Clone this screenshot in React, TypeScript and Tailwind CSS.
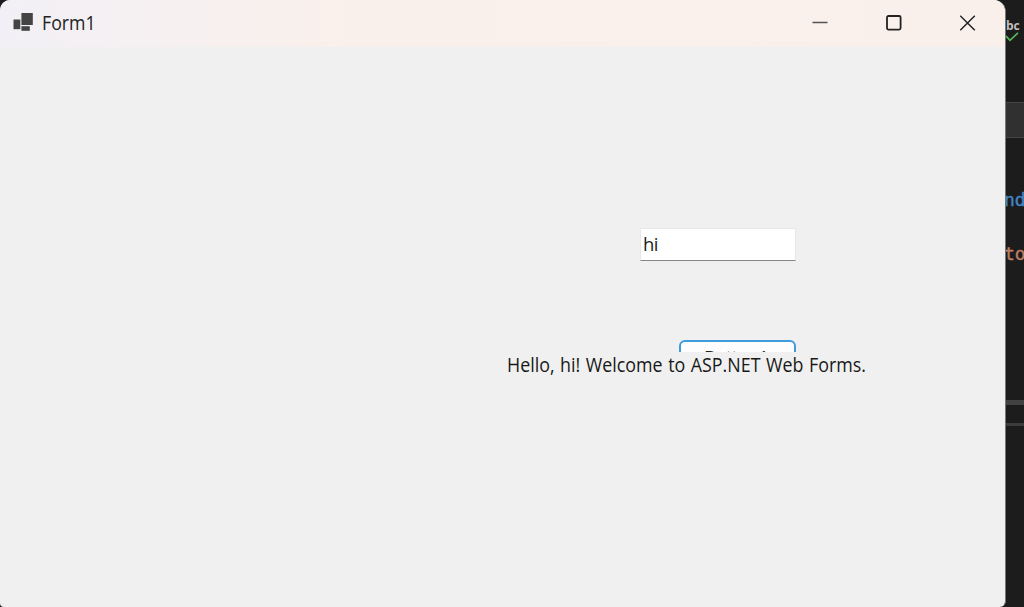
import React from "react";

function Titlebar() {
  return (
    <header className="flex h-[47px] items-center bg-linear-to-r from-[#f2f0f6] from-0% via-[#faf0eb] via-35% to-[#f9f0ec] pb-[2px]">
      <svg className="ml-[13px] shrink-0" width="21" height="20" viewBox="0 0 21 20" fill="#444">
        <rect x="0.5" y="6.5" width="6.8" height="9.7" />
        <rect x="8.4" y="0" width="11.4" height="12" />
        <rect x="8.4" y="13.2" width="8.4" height="4.6" />
      </svg>
      <h1 className="ml-2 origin-left scale-x-[0.91] text-[19.5px] leading-6 text-[#222]">Form1</h1>
      <div className="ml-auto flex w-[222px] justify-around text-[#151515]">
        <button aria-label="Minimize">
          <svg width="16" height="16" viewBox="0 0 16 16" stroke="#555" strokeWidth="1.5">
            <path d="M0.5 7.5H15.5" />
          </svg>
        </button>
        <button aria-label="Maximize">
          <svg width="16" height="16" viewBox="0 0 16 16" fill="none" stroke="#222" strokeWidth="1.8">
            <rect x="1" y="1" width="13.6" height="13.6" rx="1.5" />
          </svg>
        </button>
        <button aria-label="Close">
          <svg width="16" height="16" viewBox="0 0 16 16" stroke="#222" strokeWidth="1.5">
            <path d="M0.2 0.7L14.8 15.3M14.8 0.7L0.2 15.3" />
          </svg>
        </button>
      </div>
    </header>
  );
}

function EditorStrip() {
  return (
    <aside className="flex h-full w-[18px] shrink-0 flex-col overflow-hidden bg-[#1c1c1c]">
      <div className="flex h-[102px] flex-col pt-[18px]">
        <span className="font-['Open_Sans',sans-serif] text-[12px] leading-4 font-bold text-[#c0c0c0]">bc</span>
        <svg className="-mt-[2px]" width="14" height="10" viewBox="0 0 14 10" fill="none" stroke="#55b95c" strokeWidth="1.7">
          <path d="M0 4L4 8.3L12 0.8" />
        </svg>
      </div>
      <div className="h-9 shrink-0 border-y border-[#444] bg-[#303030]" />
      <div className="flex h-[262px] shrink-0 flex-col pt-[49px] font-['DejaVu_Sans_Mono',monospace] text-[18px] leading-[26px] [-webkit-text-stroke:0.4px]">
        <span className="-ml-[2px] text-[#4385c4]">nd</span>
        <span className="mt-7 -ml-[2px] text-[#bd7d63]">to</span>
      </div>
      <div className="h-[5px] shrink-0 bg-[#414141]" />
      <div className="h-[18px] shrink-0" />
      <div className="h-[3px] shrink-0 bg-[#3c3c3c]" />
    </aside>
  );
}

export default function App() {
  return (
    <div className="flex h-[607px] w-[1024px] overflow-hidden bg-[#1c1c1c] font-['Open_Sans',sans-serif]">
      <main className="w-[1006px] shrink-0 overflow-hidden rounded-tl-[10px] rounded-tr-[12px] rounded-br-[6px] rounded-bl-[4px] border-r border-[#777] bg-[#f0f0f0]">
        <Titlebar />
        <form className="flex flex-col pt-[181px]" onSubmit={(e) => e.preventDefault()}>
          <input
            aria-label="Name"
            defaultValue="hi"
            className="ml-[640px] h-[33px] w-[156px] border border-[#e8e8e8] border-b-[#858585] bg-white px-[2px] pb-[2px] text-[18.5px] tracking-[-0.6px] text-[#222] outline-none"
          />
          <div className="mt-[79px] ml-[679px] h-[12px] w-[117px] overflow-hidden">
            <button className="flex h-[36px] w-full items-start justify-center rounded-[6px] border-2 border-[#3f9bdc] bg-[#fdfdfd] pt-[3px] pr-[3px] text-[18.5px] leading-6 tracking-[-0.8px] text-[#222]">
              Button1
            </button>
          </div>
          <p className="ml-[507px] origin-left scale-x-[0.915] text-[19.5px] leading-[26px] [word-spacing:1px] whitespace-nowrap text-[#181818]">
            Hello, hi! Welcome to ASP.NET Web Forms.
          </p>
        </form>
      </main>
      <EditorStrip />
    </div>
  );
}
